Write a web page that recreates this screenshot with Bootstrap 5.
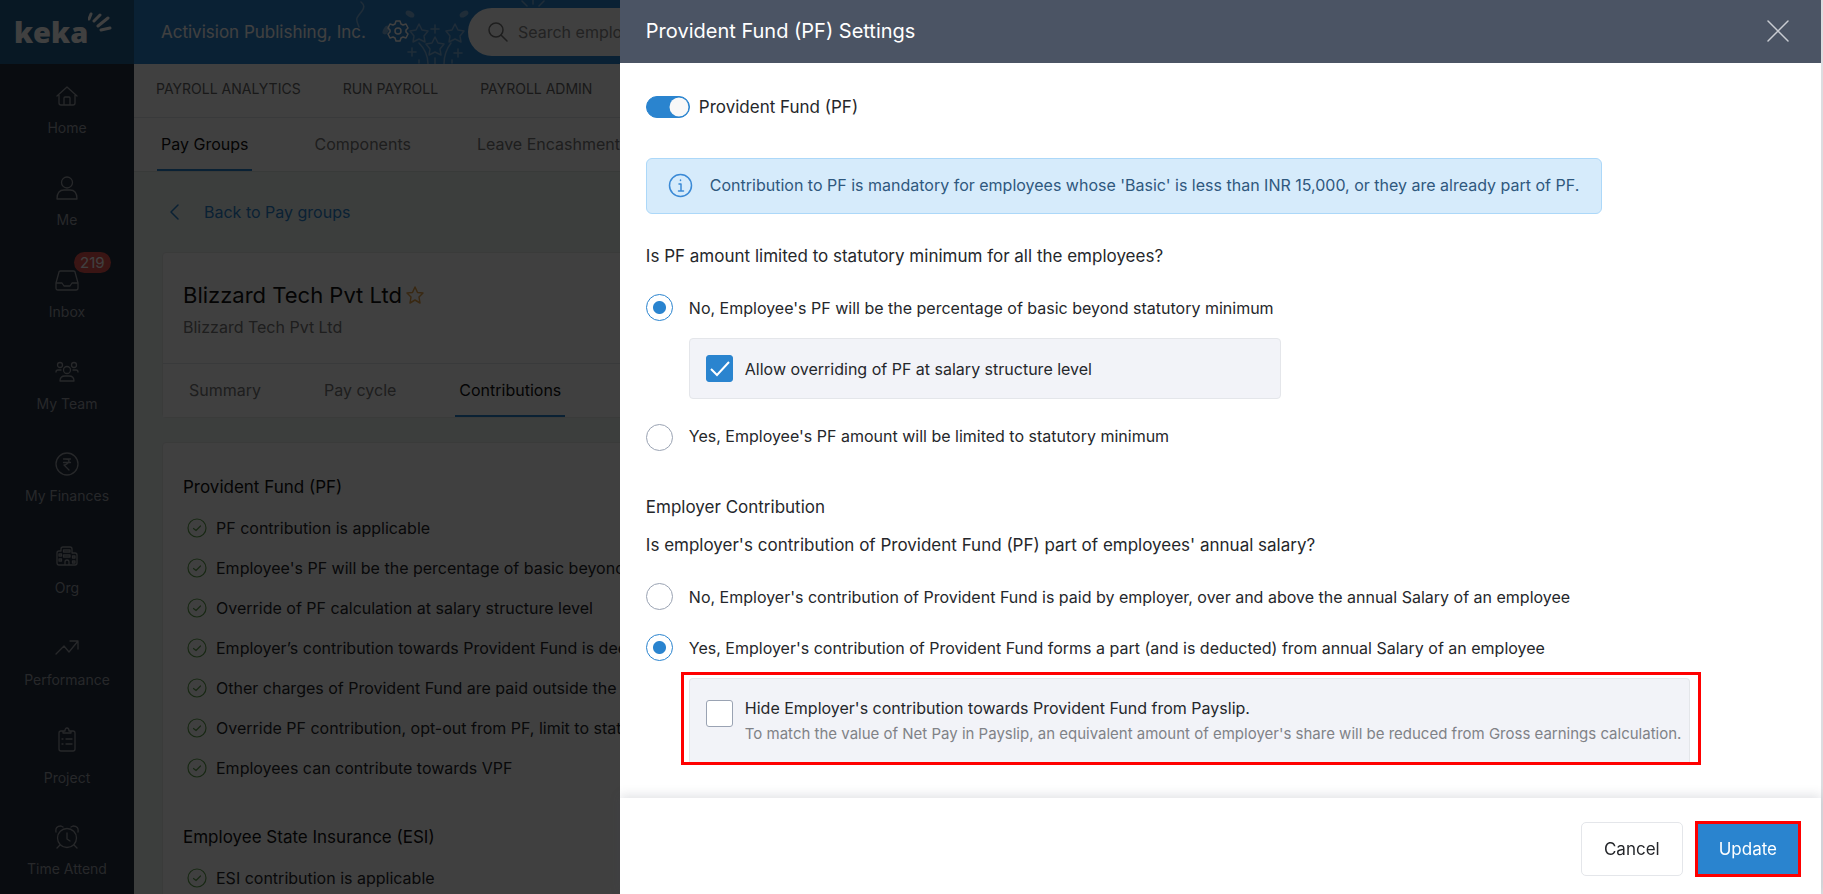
<!DOCTYPE html>
<html lang="en">
<head>
<meta charset="utf-8">
<meta name="viewport" content="width=device-width, initial-scale=1">
<title>Keka - Payroll Settings</title>
<link href="https://cdn.jsdelivr.net/npm/bootstrap@5.3.0/dist/css/bootstrap.min.css" rel="stylesheet">
<style>
  :root { --brand: #2a84cf; --ink: #25272b; --line: #e4e6ea; }
  body { font-family: Inter, "Liberation Sans", sans-serif; font-size: 16px; line-height: 24px; color: var(--ink); background: #f0f6f3; }
  svg { fill: none; stroke: currentColor; stroke-width: 1.5; stroke-linecap: round; stroke-linejoin: round; flex: none; }

  /* App shell */
  .app-side { width: 134px; background: #243040; color: #9a9fa6; }
  .side-brand { height: 64px; background: #206090; color: #fff; padding-left: 14px; }
  .side-brand b { font-family: "Open Sans", sans-serif; font-weight: 800; font-size: 29px; line-height: 32px; }
  .side-brand svg { margin-top: -18px; stroke-width: 3; }
  .side-item { height: 92px; padding-top: 19px; color: inherit; font-size: 14px; line-height: 20px; text-decoration: none; }
  .side-item svg { margin-bottom: 9px; stroke-width: 1.3; }
  .side-item.tall { height: 97px; }
  .side-item.tall svg { margin-bottom: 15px; }
  .side-count { left: 74px; top: 4px; font-size: 15px; font-weight: 400; line-height: 21px; padding: 0 6px; background: #e8564f; }
  .app-top { height: 64px; background: var(--brand); color: #fff; padding-left: 27px; font-size: 17px; }
  .app-gear { margin-left: 20px; }
  .confetti { left: 212px; top: 0; color: #7fb2de; }
  .find-box { height: 48px; margin-left: 58px; background: #fff; color: #777; padding-left: 20px; }
  .find-box input { border: 0; background: none; font-size: 16px; outline: 0; }
  .find-box input::placeholder { color: #8a8a8a; opacity: 1; }
  .nav-main { height: 54px; background: #fff; border-bottom: 1px solid var(--line); padding: 0 0 4px 22px; gap: 42px; font-size: 14px; }
  .nav-main a, .nav-tabline a { color: #777; text-decoration: none; white-space: nowrap; }
  .nav-main a { color: #666; }
  .nav-tabline { background: #fff; gap: 58px; }
  .nav-tabline a { padding: 1px 4px 0; border-bottom: 2px solid transparent; display: flex; align-items: center; }
  .nav-tabline a.on { color: #111; border-color: var(--brand); }
  .nav-sub { height: 54px; padding-left: 23px; border-bottom: 1px solid #dfe5e2; }
  .back-link { color: var(--brand); text-decoration: none; gap: 24px; }
  .panel { background: #fff; border: 1px solid #e6eae8; border-radius: 4px; }
  .panel h1 { font-size: 22px; line-height: 28px; font-weight: 400; color: #111; margin-bottom: 6px; }
  .panel h2 { font-size: 17px; line-height: 24px; font-weight: 400; color: #111; margin: 0 0 17px; }
  .panel-alias { color: #777; }
  .panel-star { color: #e3a04a; }
  .panel-tabs { height: 54px; border-top: 1px solid var(--line); padding-left: 22px; gap: 55px; }
  .facts { padding-left: 4px; gap: 16px; margin-bottom: 45px; }
  .facts li { gap: 9px; white-space: nowrap; }
  .facts svg { color: #5fa04e; stroke-width: 1.2; }

  /* Drawer */
  .offcanvas-backdrop.show { opacity: .75; }
  .offcanvas.pf-drawer { width: 66vw; border: 0; border-right: 2px solid #dcdde0; transition: none; color: var(--ink); }
  .pf-head { height: 63px; background: #4b5464; color: #fff; padding: 0 32px 2px 26px; }
  .pf-head h2 { font-size: 20px; line-height: 28px; font-weight: 400; }
  .pf-head button { color: #c9ccd2; }
  .pf-body { padding: 32px 26px 0; }
  .pf-body h3, .pf-q { font-size: 17px; line-height: 24px; font-weight: 400; }
  .pf-body h3 { margin: 44px 0 14px; }
  p.pf-q { margin: 0 0 26px; }
  .pf-body .form-check-input { margin: 0; float: none; flex: none; box-shadow: none; border: 1px solid #9aa3b3; }
  .pf-body .form-check-input:checked { border-color: var(--brand); }
  .form-check-input[type=checkbox].tick, .form-check-input[type=radio] { width: 27px; height: 27px; }
  .form-check-input[type=checkbox].tick { border-radius: 3px; }
  .tick:checked { background-color: var(--brand); background-image: url("data:image/svg+xml,%3csvg xmlns='http://www.w3.org/2000/svg' viewBox='0 0 27 27'%3e%3cpath fill='none' stroke='%23fff' stroke-width='2' d='M5 14l6 6L23 7'/%3e%3c/svg%3e"); background-size: 27px; }
  .form-check-input[type=radio]:checked { background-color: #fff; background-image: radial-gradient(circle, var(--brand) 6px, #fff 7px); background-size: 25px; }
  .pf-switch { gap: 9px; margin-bottom: 23px; }
  .pf-body .form-switch .form-check-input { width: 44px; height: 22px; }
  .pf-body .form-switch .form-check-input:checked { background-color: var(--brand); background-image: url("data:image/svg+xml,%3csvg xmlns='http://www.w3.org/2000/svg' viewBox='0 0 20 20'%3e%3ccircle cx='10' cy='10' r='9.500' fill='%23f8f8f8'/%3e%3c/svg%3e"); }
  .pf-alert { background: #d6ebfb; border: 1px solid #acd8f9; border-radius: 6px; color: #2f587e; min-height: 56px; padding: 0 22px 2px 21px; gap: 17px; margin-bottom: 30px; }
  .pf-alert svg { color: #3b8ad6; }
  .pf-opt { gap: 16px; min-height: 27px; }
  .pf-inset { background: #f2f3f8; border: 1px solid var(--line); border-radius: 4px; padding: 16px; gap: 12px; margin: 17px 0 25px 43px; width: 592px; }
  .pf-mark { border: 3px solid #f00; margin: 11px 0 0 35px; padding: 3px 8px 0 5px; width: 1020px; max-width: 96%; }
  .pf-mark .pf-inset { margin: 0; width: auto; padding: 17px 4px 14px 16px; border-bottom: 0; border-radius: 4px 4px 0 0; }
  .pf-note { font-size: 15px; line-height: 28px; color: #808287; }
  .pf-foot { height: 96px; padding: 6px 20px 0 0; gap: 12px; box-shadow: 0 -3px 10px rgba(60,70,90,.15); background: #fff; }
  .pf-foot .btn { font-size: 17px; line-height: 24px; }
  .btn-plain { border: 1px solid var(--line); border-radius: 5px; padding: 14px 22px; color: var(--ink); }
  .btn-go { background: var(--brand); color: #fff; border: 3px solid #f00; border-radius: 0; padding: 13px 21px; }
</style>
</head>
<body class="overflow-hidden">
<div class="d-flex vh-100 overflow-hidden">

  <nav class="app-side flex-shrink-0 d-flex flex-column" aria-label="Main">
    <div class="side-brand d-flex align-items-center flex-shrink-0">
      <b>keka</b>
      <svg width="26" height="22" viewBox="2 0 26 22"><path d="M3 7L5 2M8 9L14 3M12 14L22 6M15 18L24 16"/></svg>
    </div>
    <a href="#" class="side-item d-flex flex-column align-items-center flex-shrink-0">
      <svg width="24" height="26" viewBox="0 0 24 26"><path d="M2 13L12 4L22 13M4 12V20Q4 22 6 22H18Q20 22 20 20V12M9 22V15Q9 14 10 14H14Q15 14 15 15V22"/></svg>Home</a>
    <a href="#" class="side-item d-flex flex-column align-items-center flex-shrink-0">
      <svg width="24" height="26" viewBox="0 0 24 26"><circle cx="12" cy="7.500" r="5.500"/><path d="M2 24Q2 15 9 15H15Q22 15 22 24Z"/></svg>Me</a>
    <a href="#" class="side-item d-flex flex-column align-items-center flex-shrink-0 position-relative">
      <svg width="24" height="26" viewBox="0 0 24 26"><path d="M1 16L4 5Q4 4 5.500 4H18.500Q20 4 20 5L23 16V21Q23 23 21 23H3Q1 23 1 21ZM1 16H7L9 19H15L17 16H23"/></svg>Inbox
      <span class="side-count badge rounded-pill position-absolute">219</span></a>
    <a href="#" class="side-item d-flex flex-column align-items-center flex-shrink-0">
      <svg width="24" height="26" viewBox="0 0 24 26"><circle cx="5" cy="6" r="2.500"/><circle cx="19" cy="6" r="2.500"/><circle cx="12" cy="11" r="3.500"/><path d="M5 22Q5 17 10 17H14Q19 17 19 22ZM1 13Q1 11 3 11H6M23 13Q23 11 21 11H18"/></svg>My Team</a>
    <a href="#" class="side-item d-flex flex-column align-items-center flex-shrink-0">
      <svg width="24" height="26" viewBox="0 0 24 26"><circle cx="12" cy="13" r="11"/><path d="M8.500 8H15.500M8.500 11.500H15.500M10 8Q14 8 14 10T10 14H9L14 19"/></svg>My Finances</a>
    <a href="#" class="side-item d-flex flex-column align-items-center flex-shrink-0">
      <svg width="24" height="26" viewBox="0 0 24 26"><path d="M6 8V6Q6 4 8 4H15Q17 4 17 6V10H20Q22 10 22 12V20Q22 22 20 22H4Q2 22 2 20V10Q2 8 4 8H6M10 22V19Q10 17 12 17T14 19V22M8.500 7H15V9H8.500ZM8.500 12H15V14H8.500ZM4 11H6.500V13H4ZM4 16H6.500V18H4ZM17.500 13H20V15H17.500ZM17.500 18H20V20H17.500Z"/></svg>Org</a>
    <a href="#" class="side-item d-flex flex-column align-items-center flex-shrink-0">
      <svg width="24" height="26" viewBox="0 0 24 26"><path d="M1 19L9 11L14 17L23 6M15 6H23V14"/></svg>Performance</a>
    <a href="#" class="side-item tall d-flex flex-column align-items-center flex-shrink-0">
      <svg width="24" height="26" viewBox="0 0 24 26"><path d="M8 4H6Q4 4 4 6V22Q4 24 6 24H18Q20 24 20 22V6Q20 4 18 4H16M8 6V4H10Q10 1 12 1T14 4H16V6ZM11 12H17M11 17H17M7 12H8M7 17H8"/></svg>Project</a>
    <a href="#" class="side-item d-flex flex-column align-items-center flex-shrink-0">
      <svg width="24" height="26" viewBox="0 0 24 26"><circle cx="12" cy="14" r="9.500"/><path d="M12 9V15L15 17M1 8Q0 2 6 2L8 3M23 8Q24 2 18 2L16 3M5 21L2 24M19 21L22 24"/></svg>Time Attend</a>
  </nav>

  <div class="flex-grow-1 overflow-hidden">
    <header class="app-top d-flex align-items-center position-relative">
      <svg class="confetti position-absolute" width="210" height="64" viewBox="346 0 210 64" aria-hidden="true">
        <path d="M361 2Q366 6 362 11T357 18T359 27M419 24L422 30L428 31L424 36L425 42L419 39L413 42L414 36L410 31L416 30ZM455 24L458 30L464 31L460 36L461 42L455 39L449 42L450 36L446 31L452 30ZM435 37L438 43L444 44L440 49L441 55L435 52L429 55L430 49L426 44L432 43ZM435 25V33M431 29H439M412 48V56M408 52H416M458 49V57M454 53H462M419 43Q428 52 428 64M451 43Q444 52 444 64M435 58V64M419 60V63M452 60V63M522 1L527 6M533 0V4M544 1L539 6"/>
        <g fill="currentColor"><ellipse cx="410" cy="14" rx="4" ry="2" transform="rotate(30 410 14)"/><ellipse cx="464" cy="14" rx="4" ry="2" transform="rotate(-30 464 14)"/><ellipse cx="386" cy="30" rx="4" ry="2" transform="rotate(-60 386 30)"/></g>
      </svg>
      <span class="position-relative text-nowrap">Activision Publishing, Inc.</span>
      <svg class="app-gear position-relative" width="24" height="24" viewBox="0 0 24 24"><circle cx="12" cy="11" r="3"/><path d="M10 1H14L15 4L17 5L20 4L22 8L20 10V12L22 14L20 18L17 17L15 18L14 21H10L9 18L7 17L4 18L2 14L4 12V10L2 8L4 4L7 5L9 4Z"/></svg>
      <label class="find-box d-flex align-items-center gap-2 rounded-pill flex-grow-1 position-relative">
        <svg width="20" height="20" viewBox="0 0 20 20"><circle cx="8" cy="8" r="7"/><path d="M13 13L19 19"/></svg>
        <input type="search" placeholder="Search employees or actions">
      </label>
    </header>

    <nav class="nav-main d-flex align-items-center" aria-label="Payroll">
      <a href="#">PAYROLL ANALYTICS</a><a href="#">RUN PAYROLL</a><a href="#">PAYROLL ADMIN</a>
    </nav>
    <nav class="nav-tabline nav-sub d-flex" aria-label="Settings">
      <a href="#" class="on">Pay Groups</a><a href="#">Components</a><a href="#">Leave Encashment</a>
    </nav>

    <main class="px-4 ms-1">
      <a href="#" class="back-link d-inline-flex align-items-center ms-2 mt-4 pt-1 mb-4">
        <svg width="10" height="16" viewBox="0 0 10 16"><path d="M8 1L1 8L8 15"/></svg>Back to Pay groups</a>

      <section class="panel mt-1 mb-4">
        <div class="pt-4 px-3 ms-1 pb-4">
          <h1 class="mt-1 d-flex align-items-center gap-1">Blizzard Tech Pvt Ltd
            <svg class="panel-star" width="18" height="18" viewBox="0 0 18 18"><path d="M9 1L11.500 6.500L17 7L13 11L14 17L9 14L4 17L5 11L1 7L6.500 6.500Z"/></svg></h1>
          <div class="panel-alias">Blizzard Tech Pvt Ltd</div>
        </div>
        <nav class="panel-tabs nav-tabline d-flex" aria-label="Pay group">
          <a href="#">Summary</a><a href="#">Pay cycle</a><a href="#" class="on">Contributions</a>
        </nav>
      </section>

      <section class="panel px-3 pt-4">
        <div class="ms-1 pt-2">
          <h2>Provident Fund (PF)</h2>
          <ul class="facts list-unstyled d-flex flex-column" id="pfFacts"></ul>
          <h2>Employee State Insurance (ESI)</h2>
          <ul class="facts list-unstyled d-flex flex-column" id="esiFacts"></ul>
        </div>
      </section>
    </main>
  </div>
</div>

<div class="offcanvas-backdrop show"></div>

<aside class="offcanvas offcanvas-end show pf-drawer" tabindex="-1" data-bs-backdrop="false" aria-labelledby="pfTitle">
  <div class="pf-head d-flex align-items-center justify-content-between flex-shrink-0">
    <h2 class="m-0" id="pfTitle">Provident Fund (PF) Settings</h2>
    <button type="button" class="btn p-0 border-0 d-flex" aria-label="Close">
      <svg width="22" height="22" viewBox="0 0 22 22"><path d="M1 1L21 21M21 1L1 21"/></svg></button>
  </div>

  <form class="pf-body flex-grow-1 overflow-hidden" id="pfForm">
    <div class="pf-switch form-switch d-flex align-items-center p-0">
      <input class="form-check-input" type="checkbox" role="switch" id="pfOn" checked>
      <label class="pf-q" for="pfOn">Provident Fund (PF)</label>
    </div>

    <div class="d-flex pt-3">
      <div class="pf-alert d-flex align-items-center">
        <svg width="25" height="25" viewBox="0 0 25 25"><circle cx="12.500" cy="12.500" r="11"/><path d="M11 11H13V18M10.500 18H15.500M12.500 7V7.500"/></svg>
        <span>Contribution to PF is mandatory for employees whose 'Basic' is less than INR 15,000, or they are already part of PF.</span>
      </div>
    </div>

    <p class="pf-q">Is PF amount limited to statutory minimum for all the employees?</p>
    <div class="pf-opt d-flex align-items-center">
      <input class="form-check-input" type="radio" name="limit" id="limitNo" checked>
      <label for="limitNo">No, Employee's PF will be the percentage of basic beyond statutory minimum</label>
    </div>
    <div class="pf-inset d-flex align-items-center">
      <input class="form-check-input tick" type="checkbox" id="override" checked>
      <label for="override">Allow overriding of PF at salary structure level</label>
    </div>
    <div class="pf-opt d-flex">
      <input class="form-check-input" type="radio" name="limit" id="limitYes">
      <label for="limitYes">Yes, Employee's PF amount will be limited to statutory minimum</label>
    </div>

    <h3>Employer Contribution</h3>
    <p class="pf-q">Is employer's contribution of Provident Fund (PF) part of employees' annual salary?</p>
    <div class="pf-opt d-flex align-items-center">
      <input class="form-check-input" type="radio" name="part" id="partNo">
      <label for="partNo">No, Employer's contribution of Provident Fund is paid by employer, over and above the annual Salary of an employee</label>
    </div>
    <div class="pf-opt d-flex align-items-center pt-4">
      <input class="form-check-input" type="radio" name="part" id="partYes" checked>
      <label for="partYes">Yes, Employer's contribution of Provident Fund forms a part (and is deducted) from annual Salary of an employee</label>
    </div>
    <div class="pf-mark">
      <div class="pf-inset d-flex">
        <input class="form-check-input tick mt-1" type="checkbox" id="hide">
        <div>
          <label class="d-block" for="hide">Hide Employer's contribution towards Provident Fund from Payslip.</label>
          <div class="pf-note">To match the value of Net Pay in Payslip, an equivalent amount of employer's share will be reduced from Gross earnings calculation.</div>
        </div>
      </div>
    </div>
  </form>

  <div class="pf-foot d-flex align-items-center justify-content-end flex-shrink-0">
    <button type="button" class="btn btn-plain">Cancel</button>
    <button type="submit" form="pfForm" class="btn btn-go">Update</button>
  </div>
</aside>

<script src="https://cdn.jsdelivr.net/npm/bootstrap@5.3.0/dist/js/bootstrap.bundle.min.js"></script>
<script>
  const facts = {
    pfFacts: ["PF contribution is applicable", "Employee's PF will be the percentage of basic beyond statutory minimum", "Override of PF calculation at salary structure level",
      "Employer’s contribution towards Provident Fund is deducted from salary", "Other charges of Provident Fund are paid outside the salary",
      "Override PF contribution, opt-out from PF, limit to statutory minimum", "Employees can contribute towards VPF"],
    esiFacts: ["ESI contribution is applicable"]
  };
  const tick = '<svg width="20" height="20" viewBox="0 0 20 20"><circle cx="10" cy="10" r="9"/><path d="M6.500 10.500L9 12.500L13.500 8"/></svg>';
  for (const id in facts)
    document.getElementById(id).innerHTML = facts[id].map(t => `<li class="d-flex align-items-center">${tick}<span>${t}</span></li>`).join("");
</script>
</body>
</html>
